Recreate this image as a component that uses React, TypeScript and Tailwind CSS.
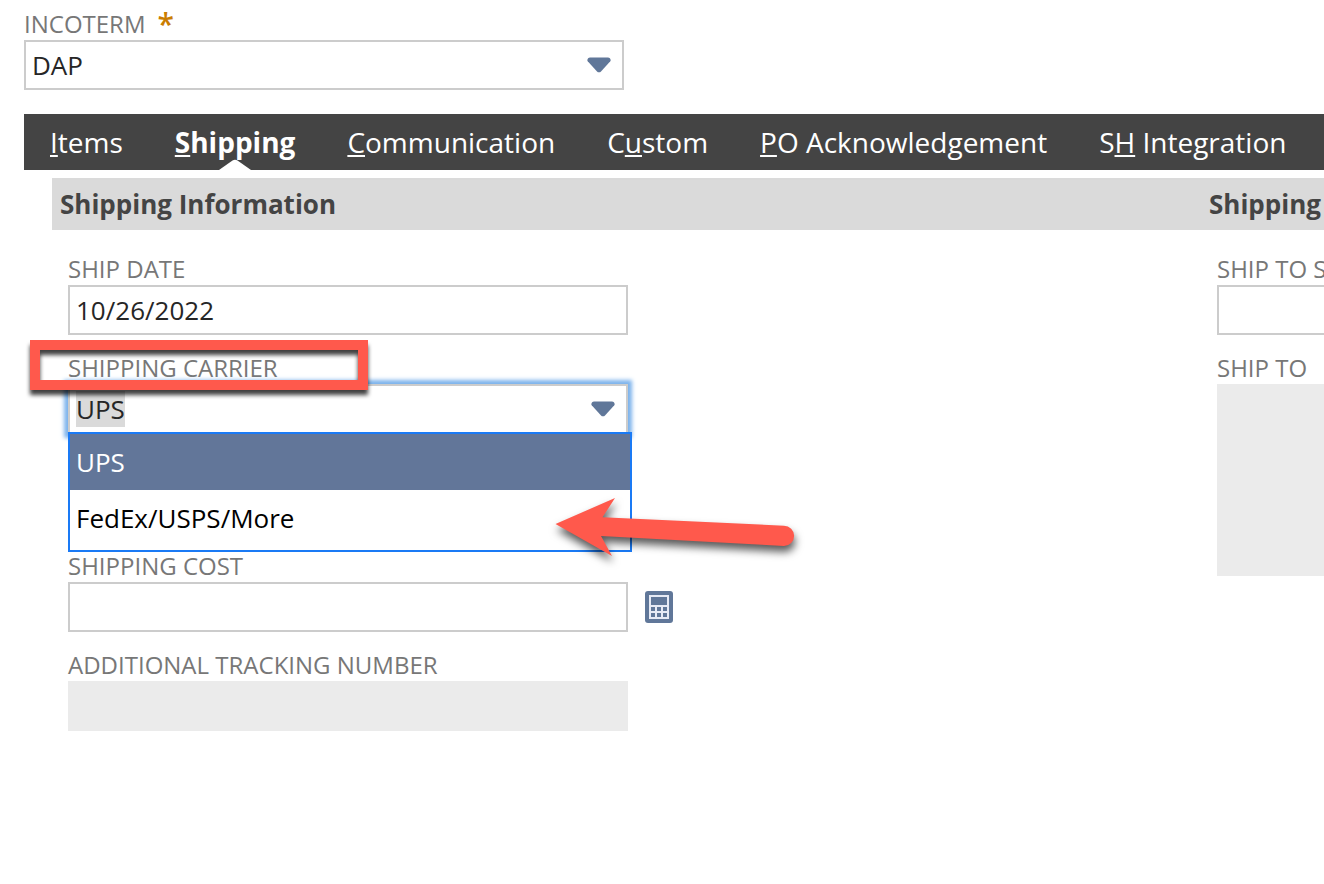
import { useState } from "react";
import clsx from "clsx";

const tabs = [
  { before: "", hotkey: "I", after: "tems" },
  { before: "", hotkey: "S", after: "hipping" },
  { before: "", hotkey: "C", after: "ommunication" },
  { before: "C", hotkey: "u", after: "stom" },
  { before: "", hotkey: "P", after: "O Acknowledgement" },
  { before: "S", hotkey: "H", after: " Integration" },
];

const carriers = ["UPS", "FedEx/USPS/More"];

const labelClass =
  "block text-[24px] leading-[33px] text-[#777777] whitespace-nowrap";
const boxClass =
  "block w-full h-[50px] border-2 border-[#cccccc] bg-white px-1.5 text-[26px] text-[#262626] outline-none appearance-none rounded-none";

const Caret = () => (
  <svg
    className="pointer-events-none absolute right-[13px] top-[17px]"
    width="24"
    height="16"
    viewBox="0 0 24 16"
    aria-hidden="true"
  >
    <path
      d="M3 .6h18c1.800 0 3.400 2.200 2.300 3.600L14 14.400c-1.200 1.200-2.800 1.200-4 0L.7 4.200C-.4 2.800 1.200.6 3 .6z"
      fill="#607799"
    />
  </svg>
);

const CalculatorIcon = () => (
  <svg width="28" height="34" viewBox="0 0 28 34" aria-hidden="true">
    <rect x="0" y="1" width="28" height="32" rx="3" fill="#607799" />
    <rect x="4" y="5" width="20" height="24" fill="#e6eaf5" />
    <rect x="6" y="7" width="16" height="8" fill="#607799" />
    {[17, 23].map((y) =>
      [6, 12, 18].map((x) => (
        <rect key={`${x}-${y}`} x={x} y={y} width="4" height="4" fill="#607799" />
      ))
    )}
  </svg>
);

const PointerArrow = () => (
  <svg
    className="pointer-events-none absolute left-[479px] top-[133px] z-20 overflow-visible drop-shadow-[1px_6px_4px_rgba(0,0,0,0.65)]"
    width="256"
    height="80"
    viewBox="0 0 256 80"
    aria-hidden="true"
  >
    <path
      d="M8.500 40 68 14 55.500 33.300 237 41.700a10.100 10.100 0 0 1 0 20.300L54 52 65 72z"
      fill="#ff594c"
    />
  </svg>
);

const App: React.FC = () => {
  const [activeTab, setActiveTab] = useState(1);
  const [carrier, setCarrier] = useState("UPS");

  return (
    <div className="min-h-screen overflow-hidden bg-white pl-6 pt-[7px] font-['Open_Sans',sans-serif]">
      <div className="w-[600px] max-w-full">
        <label
          htmlFor="incoterm"
          className="flex h-[33px] gap-3 text-[24px] leading-[33px] text-[#777777]"
        >
          INCOTERM
          <span className="text-[30px] font-semibold text-[#ca7d00]">*</span>
        </label>
        <div className="relative">
          <select id="incoterm" className={boxClass}>
            <option>DAP</option>
          </select>
          <Caret />
        </div>
      </div>

      <nav className="mt-6 flex h-14 overflow-hidden bg-[#444444]">
        {tabs.map((tab, index) => (
          <button
            key={index}
            type="button"
            onClick={() => setActiveTab(index)}
            className={clsx(
              "relative shrink-0 whitespace-nowrap px-[26px] text-[28px] leading-[56px] text-white",
              activeTab === index && "font-bold"
            )}
          >
            {tab.before}
            <span className="underline decoration-2 underline-offset-2">{tab.hotkey}</span>
            {tab.after}
            {activeTab === index && (
              <svg
                className="absolute bottom-0 left-1/2 -translate-x-1/2"
                width="32"
                height="11"
                viewBox="0 0 32 11"
                aria-hidden="true"
              >
                <path d="M0 11 13.500 1.500q2.500-1.500 5 0L32 11z" fill="#ffffff" />
              </svg>
            )}
          </button>
        ))}
      </nav>

      <main className="mt-2 pl-7">
        <div className="grid grid-cols-[minmax(0,1149fr)_minmax(0,123fr)] bg-[#dadada] text-[26px] font-bold leading-[52px] text-[#444444]">
          <h2 className="pl-2">Shipping Information</h2>
          <h2 className="pl-2">Shipping</h2>
        </div>

        <div className="mt-[22px] grid grid-cols-[minmax(0,1149fr)_minmax(0,123fr)]">
          <div className="flex flex-col gap-4 pl-4">
            <div className="w-[560px]">
              <label htmlFor="ship-date" className={labelClass}>
                SHIP DATE
              </label>
              <input id="ship-date" className={boxClass} defaultValue="10/26/2022" />
            </div>

            <div className="relative w-[560px]">
              <label htmlFor="carrier" className={labelClass}>
                SHIPPING CARRIER
              </label>
              <div className="relative">
                <select
                  id="carrier"
                  value={carrier}
                  onChange={(e) => setCarrier(e.target.value)}
                  className={clsx(
                    boxClass,
                    "bg-[linear-gradient(#dadada,#dadada)] bg-[length:49px_36px] bg-[position:6px_5px] bg-no-repeat shadow-[0_0_4px_4px_#7db3ec]"
                  )}
                >
                  {carriers.map((name) => (
                    <option key={name}>{name}</option>
                  ))}
                </select>
                <Caret />
              </div>

              <ul className="absolute left-0 top-[81px] z-10 w-[564px] border-2 border-[#1a7af5] bg-white pb-1">
                {carriers.map((name) => (
                  <li key={name}>
                    <button
                      type="button"
                      onClick={() => setCarrier(name)}
                      className={clsx(
                        "block h-14 w-full px-1.5 text-left text-[26px]",
                        name === carrier ? "bg-[#627699] text-white" : "text-black"
                      )}
                    >
                      {name}
                    </button>
                  </li>
                ))}
              </ul>

              {/* callout around the label */}
              <div className="pointer-events-none absolute -left-[38px] -top-[11px] z-20 h-[50px] w-[338px] border-10 border-[#ff594c] drop-shadow-[0_5px_2px_rgba(0,0,0,0.75)]" />
              <PointerArrow />
            </div>

            {/* row covered by the open carrier list */}
            <div className="h-[83px]" />

            <div className="flex items-end gap-[17px]">
              <div className="w-[560px]">
                <label htmlFor="cost" className={labelClass}>
                  SHIPPING COST
                </label>
                <input id="cost" className={boxClass} />
              </div>
              <button type="button" aria-label="Calculate" className="mb-2">
                <CalculatorIcon />
              </button>
            </div>

            <div className="w-[560px]">
              <label htmlFor="tracking" className={labelClass}>
                ADDITIONAL TRACKING NUMBER
              </label>
              <input
                id="tracking"
                disabled
                className="block h-[50px] w-full bg-[#ebebeb] px-2 text-[26px]"
              />
            </div>
          </div>

          <div className="flex flex-col gap-4 pl-4">
            <div className="w-[560px]">
              <label htmlFor="ship-to-s" className={labelClass}>
                SHIP TO S
              </label>
              <input id="ship-to-s" className={boxClass} />
            </div>
            <div className="w-[560px]">
              <label htmlFor="ship-to" className={labelClass}>
                SHIP TO
              </label>
              <textarea
                id="ship-to"
                disabled
                className="block h-48 w-full resize-none bg-[#ebebeb] px-2 text-[26px]"
              />
            </div>
          </div>
        </div>
      </main>
    </div>
  );
};

export default App;
